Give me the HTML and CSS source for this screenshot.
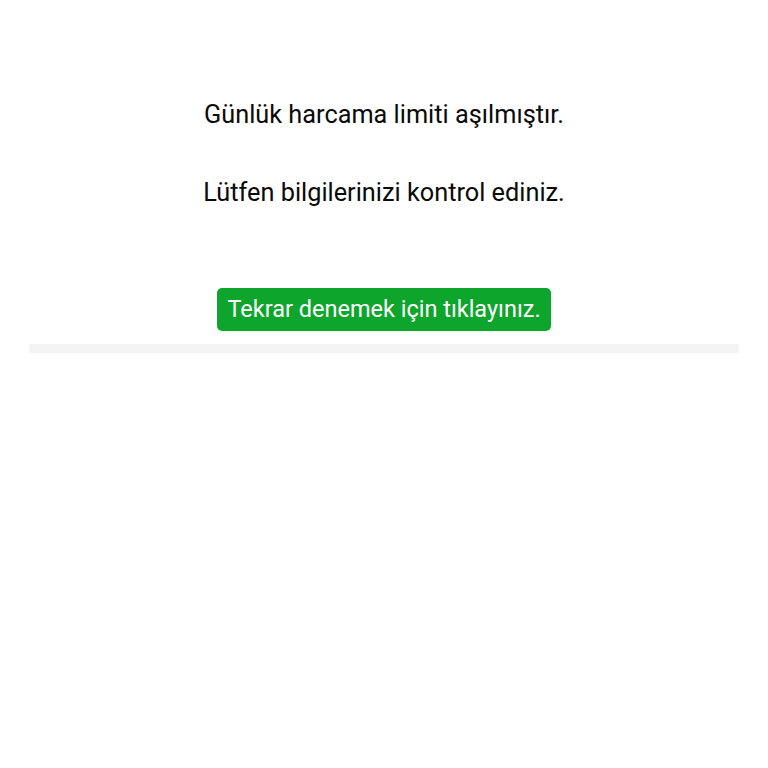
FILE: index.html
```html
<!DOCTYPE html>
<html lang="tr">
<head>
<meta charset="utf-8">
<link rel="stylesheet" href="styles.css">
</head>
<body>
<main class="page">
  <p class="msg msg-first">Günlük harcama limiti aşılmıştır.</p>
  <p class="msg msg-second">Lütfen bilgilerinizi kontrol ediniz.</p>
  <div class="actions">
    <button class="retry" type="button">Tekrar denemek için tıklayınız.</button>
  </div>
  <div class="divider"></div>
</main>
</body>
</html>
```
FILE: styles.css
```css
html, body {
  margin: 0;
  padding: 0;
  background: #ffffff;
}
body {
  font-family: Roboto, "Noto Sans", sans-serif;
  color: #0a0a0a;
}
.page {
  padding: 0 29px;
  display: flex;
  flex-direction: column;
  align-items: center;
}
.msg {
  margin: 0;
  font-size: 25.3px;
  line-height: 30px;
  text-align: center;
}
.msg-first {
  margin-top: 100px;
}
.msg-second {
  margin-top: 48px;
}
.actions {
  margin-top: 80px;
  display: flex;
  justify-content: center;
}
.retry {
  font-family: Roboto, "Noto Sans", sans-serif;
  font-size: 23.5px;
  line-height: 30px;
  color: #ffffff;
  background: #0da52c;
  border: none;
  border-radius: 5px;
  padding: 6px 10.5px 7px;
}
.divider {
  align-self: stretch;
  height: 9px;
  margin-top: 13px;
  background: #f4f4f4;
}
```
